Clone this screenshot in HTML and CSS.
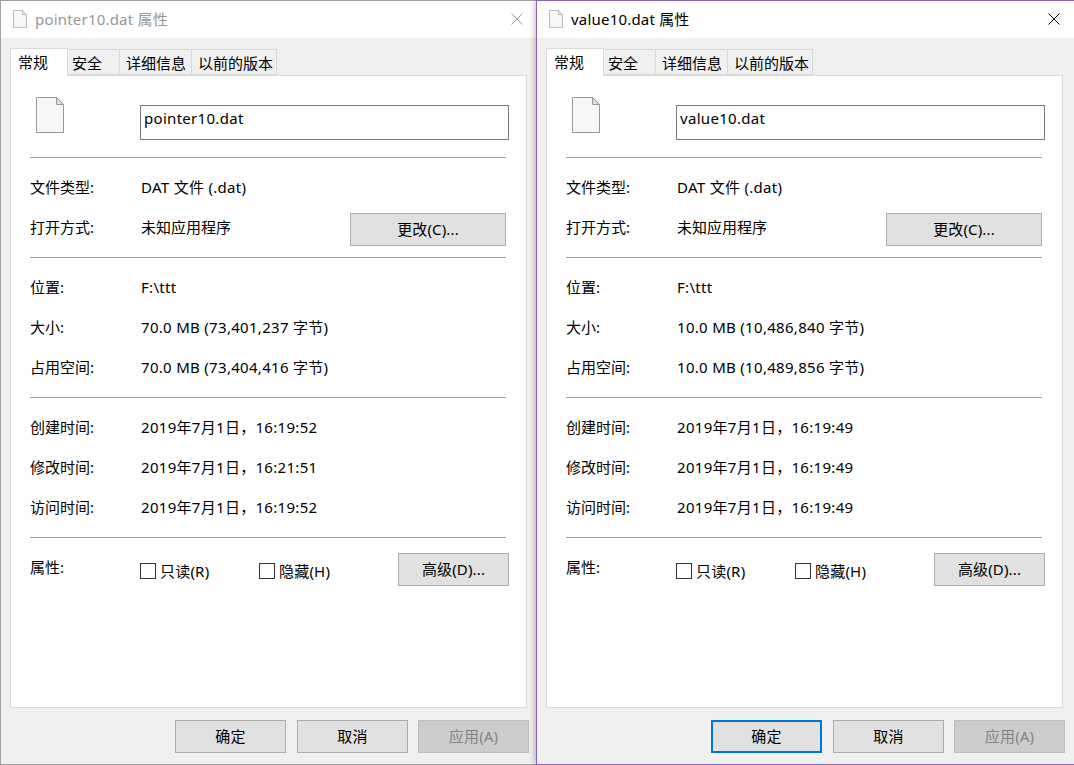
FILE: index.html
```html
<!DOCTYPE html>
<html lang="zh-CN">
<head>
<meta charset="utf-8">
<title>属性</title>
<link rel="stylesheet" href="styles.css">
</head>
<body>
<section class="window inactive">
  <header class="titlebar">
    <svg class="title-icon" viewBox="0 0 14 18"><path d="M.5.5h9l4 4v13H.5z" fill="#f7f7f7" stroke="#bdbdbd"/><path d="M9.5.5v4h4" fill="#e0e0e0" stroke="#bdbdbd"/></svg>
    <span class="title-text">pointer10.dat 属性</span>
    <svg class="close" viewBox="0 0 12 12"><path d="M.5.5l11 11M11.5.5l-11 11" fill="none" stroke="currentColor"/></svg>
  </header>
  <div class="tabs">
    <span class="tab active">常规</span><span class="tab t2">安全</span><span class="tab t3">详细信息</span><span class="tab t4">以前的版本</span>
  </div>
  <main class="panel">
    <div class="name-row">
      <svg class="file-icon" viewBox="0 0 28 36"><path d="M.5.5h20l7 7v28H.5z" fill="#f7f7f7" stroke="#999"/><path d="M20.5.5v7h7z" fill="#dcdcdc" stroke="#999"/></svg>
      <div class="name-input">pointer10.dat</div>
    </div>
    <div class="section">
      <div class="row"><span class="label">文件类型:</span><span class="value">DAT 文件 (.dat)</span></div>
      <div class="row"><span class="label">打开方式:</span><span>未知应用程序</span><button class="btn change">更改(C)...</button></div>
    </div>
    <div class="section">
      <div class="row"><span class="label">位置:</span><span class="value">F:\ttt</span></div>
      <div class="row"><span class="label">大小:</span><span class="value">70.0 MB (73,401,237 字节)</span></div>
      <div class="row"><span class="label">占用空间:</span><span class="value">70.0 MB (73,404,416 字节)</span></div>
    </div>
    <div class="section">
      <div class="row"><span class="label">创建时间:</span><span class="value">2019年7月1日，16:19:52</span></div>
      <div class="row"><span class="label">修改时间:</span><span class="value">2019年7月1日，16:21:51</span></div>
      <div class="row"><span class="label">访问时间:</span><span class="value">2019年7月1日，16:19:52</span></div>
    </div>
    <div class="section attrs">
      <div class="row"><span class="label">属性:</span>
        <span class="check c1"><i class="box"></i>只读(R)</span>
        <span class="check c2"><i class="box"></i>隐藏(H)</span>
        <button class="btn advanced">高级(D)...</button>
      </div>
    </div>
  </main>
  <footer class="footer">
    <button class="btn action">确定</button><button class="btn action">取消</button><button class="btn action disabled">应用(A)</button>
  </footer>
</section>
<section class="window front">
  <header class="titlebar">
    <svg class="title-icon" viewBox="0 0 14 18"><path d="M.5.5h9l4 4v13H.5z" fill="#f7f7f7" stroke="#bdbdbd"/><path d="M9.5.5v4h4" fill="#e0e0e0" stroke="#bdbdbd"/></svg>
    <span class="title-text">value10.dat 属性</span>
    <svg class="close" viewBox="0 0 12 12"><path d="M.5.5l11 11M11.5.5l-11 11" fill="none" stroke="currentColor"/></svg>
  </header>
  <div class="tabs">
    <span class="tab active">常规</span><span class="tab t2">安全</span><span class="tab t3">详细信息</span><span class="tab t4">以前的版本</span>
  </div>
  <main class="panel">
    <div class="name-row">
      <svg class="file-icon" viewBox="0 0 28 36"><path d="M.5.5h20l7 7v28H.5z" fill="#f7f7f7" stroke="#999"/><path d="M20.5.5v7h7z" fill="#dcdcdc" stroke="#999"/></svg>
      <div class="name-input">value10.dat</div>
    </div>
    <div class="section">
      <div class="row"><span class="label">文件类型:</span><span class="value">DAT 文件 (.dat)</span></div>
      <div class="row"><span class="label">打开方式:</span><span>未知应用程序</span><button class="btn change">更改(C)...</button></div>
    </div>
    <div class="section">
      <div class="row"><span class="label">位置:</span><span class="value">F:\ttt</span></div>
      <div class="row"><span class="label">大小:</span><span class="value">10.0 MB (10,486,840 字节)</span></div>
      <div class="row"><span class="label">占用空间:</span><span class="value">10.0 MB (10,489,856 字节)</span></div>
    </div>
    <div class="section">
      <div class="row"><span class="label">创建时间:</span><span class="value">2019年7月1日，16:19:49</span></div>
      <div class="row"><span class="label">修改时间:</span><span class="value">2019年7月1日，16:19:49</span></div>
      <div class="row"><span class="label">访问时间:</span><span class="value">2019年7月1日，16:19:49</span></div>
    </div>
    <div class="section attrs">
      <div class="row"><span class="label">属性:</span>
        <span class="check c1"><i class="box"></i>只读(R)</span>
        <span class="check c2"><i class="box"></i>隐藏(H)</span>
        <button class="btn advanced">高级(D)...</button>
      </div>
    </div>
  </main>
  <footer class="footer">
    <button class="btn action primary">确定</button><button class="btn action">取消</button><button class="btn action disabled">应用(A)</button>
  </footer>
</section>
</body>
</html>
```
FILE: styles.css
```css
* { box-sizing: border-box; }
html, body { margin: 0; height: 100%; }
body {
  position: relative;
  width: 1074px;
  height: 765px;
  overflow: hidden;
  background: #f0f0f0;
  color: #000;
  font: 15px/20px "Noto Sans", "Noto Sans CJK SC", sans-serif;
}
.window {
  position: absolute;
  top: 0;
  height: 765px;
  display: flex;
  flex-direction: column;
  background: #f0f0f0;
  border: 1px solid #a0a0a0;
}
.inactive { left: 0; width: 537px; }
.front {
  left: 536px;
  width: 539px;
  border-color: #8a63bd;
  box-shadow: 0 0 7px rgba(0, 0, 0, .35);
}
.titlebar {
  flex: none;
  height: 37px;
  display: flex;
  align-items: center;
  background: #fff;
  padding: 0 0 1px 12px;
}
.title-icon { width: 14px; height: 18px; margin-right: 8px; flex: none; }
.title-text { flex: 1; letter-spacing: .2px; }
.inactive .title-text { color: #999; }
.close { width: 12px; height: 12px; margin-right: 13px; flex: none; color: #000; }
.front .close { margin-right: 14px; }
.inactive .close { color: #999; }
.tabs {
  flex: none;
  height: 38px;
  display: flex;
  align-items: flex-end;
  padding-left: 9px;
  position: relative;
  z-index: 1;
  margin-bottom: -1px;
}
.tab {
  height: 26px;
  border: 1px solid #d9d9d9;
  border-left: 0;
  padding: 3px 0 0 4px;
  margin-bottom: 1px;
  white-space: nowrap;
}
.tab.active {
  width: 58px;
  height: 28px;
  margin-bottom: 0;
  background: #fff;
  border-left: 1px solid #d9d9d9;
  border-bottom: 0;
  padding: 3px 0 0 7px;
}
.t2 { width: 52px; }
.t3 { width: 72px; padding-left: 6px; }
.t4 { width: 85px; padding-left: 6px; }
.panel {
  flex: none;
  height: 633px;
  width: 517px;
  margin-left: 9px;
  background: #fff;
  border: 1px solid #d9d9d9;
  padding: 21px 0 0 19px;
}
.name-row { height: 60px; display: flex; align-items: flex-start; }
.file-icon { width: 28px; height: 36px; margin-left: 6px; flex: none; }
.name-input {
  margin: 8px 0 0 76px;
  width: 369px;
  height: 35px;
  border: 1px solid #7a7a7a;
  padding: 2px 0 0 3px;
  letter-spacing: .3px;
}
.section {
  width: 476px;
  border-top: 1px solid #a0a0a0;
  padding: 9px 0 10px;
}
.row { height: 40px; display: flex; align-items: center; position: relative; }
.label { width: 111px; flex: none; }
.value { letter-spacing: .3px; }
.btn {
  font: inherit;
  color: #000;
  background: #e1e1e1;
  border: 1px solid #adadad;
  padding: 0 0 2px;
  height: 33px;
  border-radius: 0;
  letter-spacing: .15px;
}
.change { width: 156px; margin-left: auto; align-self: flex-start; margin-top: 6px; }
.advanced { width: 111px; position: absolute; left: 368px; top: 6px; }
.check { display: flex; align-items: center; position: relative; top: 4px; left: -1px; letter-spacing: .2px; }
.c1 { width: 119px; }
.box {
  width: 16px;
  height: 16px;
  border: 1px solid #333;
  background: #fff;
  margin-right: 4px;
  flex: none;
}
.footer {
  flex: none;
  display: flex;
  gap: 11px;
  padding: 12px 0 0 174px;
}
.action { width: 111px; }
.primary { border: 2px solid #0078d7; }
.disabled { background: #ccc; border-color: #bfbfbf; color: #838383; margin-left: -1px; }
```
